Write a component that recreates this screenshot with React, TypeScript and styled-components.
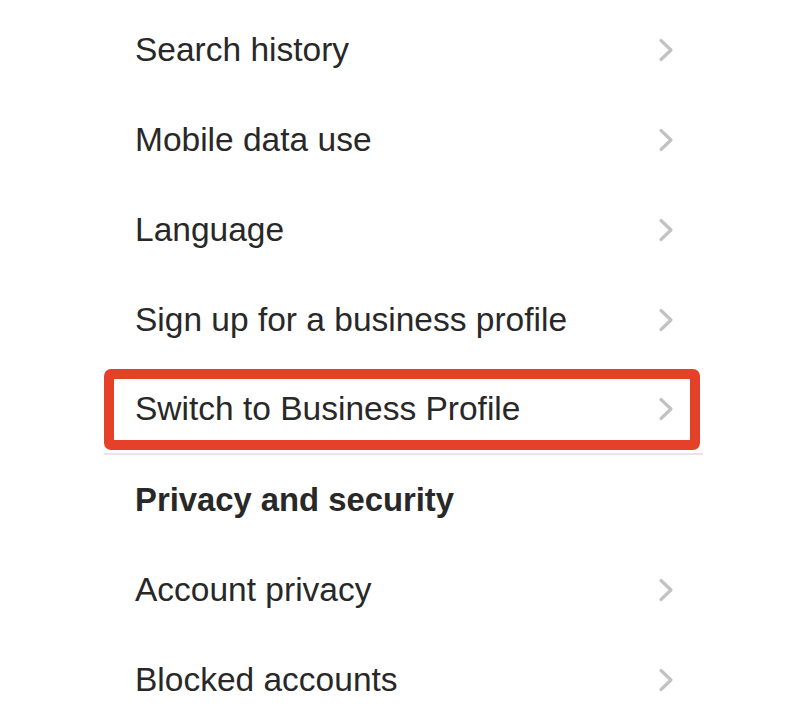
import React from "react";
import styled, { createGlobalStyle } from "styled-components";

const GlobalStyle = createGlobalStyle`
  html, body {
    margin: 0;
    padding: 0;
    background: #ffffff;
  }
  body {
    font-family: "Liberation Sans", Arial, sans-serif;
    color: #262626;
  }
`;

const items = [
  { label: "Search history" },
  { label: "Mobile data use" },
  { label: "Language" },
  { label: "Sign up for a business profile" },
  { label: "Switch to Business Profile", highlight: true, divider: true },
  { label: "Privacy and security", header: true },
  { label: "Account privacy" },
  { label: "Blocked accounts" },
];

export default function App() {
  return (
    <>
      <GlobalStyle />
      <Page>
        <List>
          {items.map((item) => (
            <Row key={item.label} $divider={item.divider}>
              <Label $header={item.header}>{item.label}</Label>
              {!item.header && <Chevron />}
              {item.highlight && <Highlight />}
            </Row>
          ))}
        </List>
      </Page>
    </>
  );
}

const Chevron = () => (
  <ChevronIcon width="16" height="24" viewBox="0 0 16 24">
    <polyline
      points="3,2.5 13,12 3,21.5"
      fill="none"
      stroke="#c2c2c4"
      strokeWidth="3.2"
      strokeLinecap="round"
      strokeLinejoin="round"
    />
  </ChevronIcon>
);

const Page = styled.div`
  width: 812px;
  height: 714px;
  overflow: hidden;
  padding: 5px 109px 0 104px;
  box-sizing: border-box;
`;

const List = styled.div`
  display: flex;
  flex-direction: column;
`;

const Row = styled.div<{ $divider?: boolean }>`
  position: relative;
  height: 90px;
  display: flex;
  align-items: center;
  justify-content: space-between;
  padding: 0 29px 0 31px;
  box-sizing: border-box;
  border-bottom: ${(p) => (p.$divider ? "2px solid #e6e6e6" : "none")};
`;

const Label = styled.span<{ $header?: boolean }>`
  font-size: ${(p) => (p.$header ? "32.8px" : "33.5px")};
  font-weight: ${(p) => (p.$header ? 700 : 400)};
  line-height: 1;
  white-space: nowrap;
  color: #282828;
`;

const ChevronIcon = styled.svg`
  flex-shrink: 0;
  display: block;
`;

const Highlight = styled.div`
  position: absolute;
  left: 0;
  top: 4px;
  width: 596px;
  height: 81px;
  border: 10px solid #e5412a;
  border-radius: 7px;
  box-sizing: border-box;
  pointer-events: none;
`;
